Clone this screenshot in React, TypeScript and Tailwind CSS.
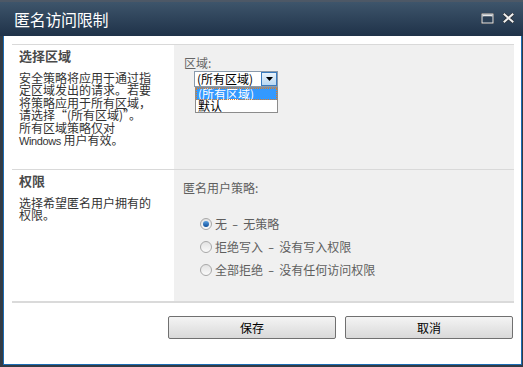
import React from "react";

const cjk = { fontFamily: '"Noto Sans CJK SC", "Noto Sans", sans-serif' };

function Radio({ checked }: { checked?: boolean }) {
  return (
    <span className="relative inline-block w-[12px] h-[12px] rounded-full border border-[#a8a8a8] bg-gradient-to-b from-[#e3e3e3] to-[#fafafa] shrink-0">
      {checked && (
        <span className="absolute left-[2px] top-[2px] w-[6px] h-[6px] rounded-full bg-gradient-to-b from-[#5aa0e0] to-[#0b4e9a]" />
      )}
    </span>
  );
}

function Option({ a, b }: { a: string; b: string }) {
  return (
    <span>
      {a}
      <span className="inline-block mx-[6px] scale-x-150">-</span>
      {b}
    </span>
  );
}

export default function App() {
  return (
    <div className="w-[523px] h-[367px] bg-[#323b45] flex flex-col overflow-hidden" style={cjk}>
      {/* Title bar */}
      <div className="h-[36px] shrink-0 border-t-2 border-[#4d5866] bg-gradient-to-b from-[#3e556b] to-[#1f3249] flex items-center pl-[14px] pr-[9px]">
        <div className="text-white text-[16px] leading-[16px] flex-1 tracking-[-0.3px]">匿名访问限制</div>
        <div className="flex items-center gap-[9px] mt-[-2px]">
          <svg width="13" height="11" viewBox="0 0 13 11">
            <rect x="0.5" y="0.5" width="12" height="10" fill="none" stroke="#2a2f36" />
            <rect x="1" y="1" width="11" height="9" fill="none" stroke="#e8e8e8" />
            <rect x="1.5" y="1.5" width="10" height="2" fill="#e8e8e8" />
            <rect x="2.5" y="3.5" width="8" height="5.5" fill="#2b3f55" />
          </svg>
          <svg width="11" height="10" viewBox="0 0 11 10">
            <path d="M1.5 1.5 L9.5 8.5 M9.5 1.5 L1.5 8.5" stroke="#2a2f36" strokeWidth="3.4" strokeLinecap="square" />
            <path d="M1.5 1.5 L9.5 8.5 M9.5 1.5 L1.5 8.5" stroke="#f0f0f0" strokeWidth="2" strokeLinecap="square" />
          </svg>
        </div>
      </div>

      {/* Body */}
      <div className="ml-[3px] mr-[1px] mb-[2px] flex-1 bg-white border-x border-b border-[#1c6cb4] flex flex-col pt-[8px] pl-[8px] pr-[7px]">
        {/* Section 1 */}
        <div className="border-t border-[#d9d9d9] flex h-[125px] shrink-0">
          <div className="w-[162px] pl-[7px] pt-[3px] text-[#444]">
            <div className="text-[13px] leading-[16px] font-bold text-[#4a4a4a]">选择区域</div>
            <div className="mt-[8px] text-[12px] leading-[12.4px] text-[#333]">
              <div>安全策略将应用于通过指</div>
              <div>定区域发出的请求。若要</div>
              <div>将策略应用于所有区域，</div>
              <div>请选择“(所有区域)”。</div>
              <div>所有区域策略仅对</div>
              <div>
                <span style={{ fontFamily: '"Liberation Sans", sans-serif' }} className="text-[11px] tracking-[-0.4px]">Windows</span> 用户有效。
              </div>
            </div>
          </div>
          <div className="flex-1 bg-[#f0f0f0] pl-[10px] pt-[11px]">
            <div className="text-[12px] leading-[14px] text-[#666]">区域:</div>
            <div className="ml-[10px] mt-[1px] w-[84px]">
              <div className="h-[16px] border border-[#8a9aab] bg-white flex items-center pl-[2px]">
                <span className="flex-1 text-[12px] leading-[12px] text-black">(所有区域)</span>
                <span className="w-[16px] h-[14px] border border-[#3a7bbf] bg-gradient-to-b from-[#e8f3fc] to-[#b9d8f3] flex items-center justify-center">
                  <svg width="7" height="4" viewBox="0 0 7 4"><path d="M0 0 H7 L3.5 4 Z" fill="#000" /></svg>
                </span>
              </div>
              <div className="ml-[1px] border border-[#8c8c8c] bg-white">
                <div className="h-[12px] bg-[#3399ff] text-white text-[12px] leading-[12px] pl-[2px] outline outline-1 outline-dotted outline-[#e07b20] -outline-offset-1">(所有区域)</div>
                <div className="h-[12px] text-black text-[12px] leading-[12px] pl-[2px]">默认</div>
              </div>
            </div>
          </div>
        </div>

        {/* Section 2 */}
        <div className="border-t border-[#d9d9d9] flex h-[132px] shrink-0">
          <div className="w-[162px] pl-[7px] pt-[3px]">
            <div className="text-[13px] leading-[16px] font-bold text-[#4a4a4a]">权限</div>
            <div className="mt-[8px] text-[12px] leading-[12.4px] text-[#333]">
              <div>选择希望匿名用户拥有的</div>
              <div>权限。</div>
            </div>
          </div>
          <div className="flex-1 bg-[#f0f0f0] pl-[9px] pt-[11px] text-[12px] text-[#5e5e5e]">
            <div className="leading-[14px]">匿名用户策略:</div>
            <div className="mt-[22px] ml-[17px] flex flex-col gap-[9px]">
              <div className="flex items-center gap-[3px] h-[14px]">
                <Radio checked />
                <Option a="无" b="无策略" />
              </div>
              <div className="flex items-center gap-[3px] h-[14px]">
                <Radio />
                <Option a="拒绝写入" b="没有写入权限" />
              </div>
              <div className="flex items-center gap-[3px] h-[14px]">
                <Radio />
                <Option a="全部拒绝" b="没有任何访问权限" />
              </div>
            </div>
          </div>
        </div>

        <div className="border-t-2 border-[#dadada]" />

        {/* Buttons */}
        <div className="flex justify-end gap-[9px] mt-[13px] pr-[1px]">
          <button className="w-[168px] h-[23px] rounded-[2px] border border-[#707070] bg-gradient-to-b from-[#f4f4f4] to-[#d9d9d9] text-[12px] text-black">保存</button>
          <button className="w-[168px] h-[23px] rounded-[2px] border border-[#707070] bg-gradient-to-b from-[#f4f4f4] to-[#d9d9d9] text-[12px] text-black">取消</button>
        </div>
      </div>
    </div>
  );
}
